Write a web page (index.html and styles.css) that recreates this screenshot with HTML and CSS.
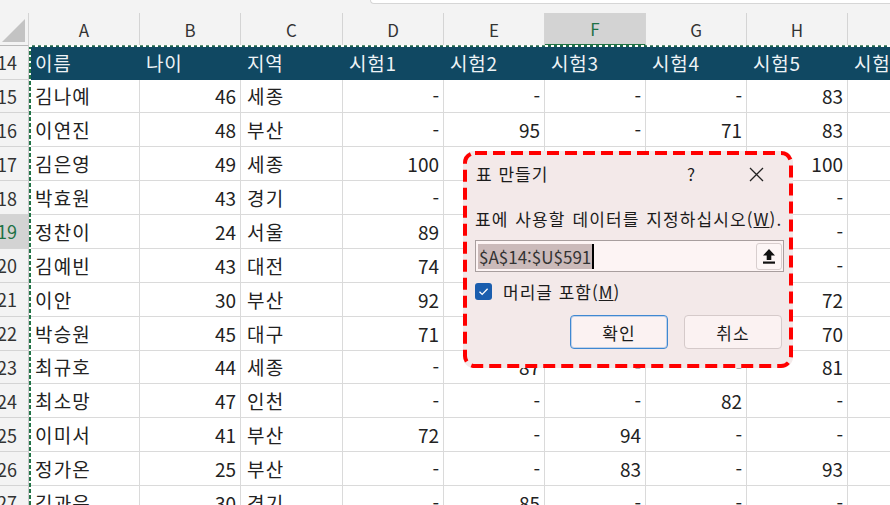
FILE: index.html
```html
<!DOCTYPE html>
<html lang="ko">
<head>
<meta charset="utf-8">
<link rel="stylesheet" href="styles.css">
</head>
<body>
<div class="topstrip"><div class="fbar"></div></div>
<div class="wrap">
<div class="sheet">
  <div class="c corner"><div class="tri"></div></div>
  <div class="c ch">A</div><div class="c ch">B</div><div class="c ch">C</div><div class="c ch">D</div><div class="c ch">E</div><div class="c ch sel">F</div><div class="c ch">G</div><div class="c ch">H</div><div class="c ch">I</div>

  <div class="c rh">14</div>
  <div class="c hd">이름</div><div class="c hd">나이</div><div class="c hd">지역</div><div class="c hd">시험1</div><div class="c hd">시험2</div><div class="c hd">시험3</div><div class="c hd">시험4</div><div class="c hd">시험5</div><div class="c hd">시험6</div>

  <div class="c rh">15</div>
  <div class="c l">김나예</div><div class="c r">46</div><div class="c l">세종</div><div class="c r">-</div><div class="c r">-</div><div class="c r">-</div><div class="c r">-</div><div class="c r">83</div><div class="c"></div>

  <div class="c rh">16</div>
  <div class="c l">이연진</div><div class="c r">48</div><div class="c l">부산</div><div class="c r">-</div><div class="c r">95</div><div class="c r">-</div><div class="c r">71</div><div class="c r">83</div><div class="c"></div>

  <div class="c rh">17</div>
  <div class="c l">김은영</div><div class="c r">49</div><div class="c l">세종</div><div class="c r">100</div><div class="c r">-</div><div class="c r">-</div><div class="c r">-</div><div class="c r">100</div><div class="c"></div>

  <div class="c rh">18</div>
  <div class="c l">박효원</div><div class="c r">43</div><div class="c l">경기</div><div class="c r">-</div><div class="c r">-</div><div class="c r">-</div><div class="c r">-</div><div class="c r">-</div><div class="c"></div>

  <div class="c rh sel">19</div>
  <div class="c l">정찬이</div><div class="c r">24</div><div class="c l">서울</div><div class="c r">89</div><div class="c r">-</div><div class="c r">-</div><div class="c r">-</div><div class="c r">-</div><div class="c"></div>

  <div class="c rh">20</div>
  <div class="c l">김예빈</div><div class="c r">43</div><div class="c l">대전</div><div class="c r">74</div><div class="c r">-</div><div class="c r">-</div><div class="c r">-</div><div class="c r">-</div><div class="c"></div>

  <div class="c rh">21</div>
  <div class="c l">이안</div><div class="c r">30</div><div class="c l">부산</div><div class="c r">92</div><div class="c r">-</div><div class="c r">-</div><div class="c r">-</div><div class="c r">72</div><div class="c"></div>

  <div class="c rh">22</div>
  <div class="c l">박승원</div><div class="c r">45</div><div class="c l">대구</div><div class="c r">71</div><div class="c r">-</div><div class="c r">-</div><div class="c r">-</div><div class="c r">70</div><div class="c"></div>

  <div class="c rh">23</div>
  <div class="c l">최규호</div><div class="c r">44</div><div class="c l">세종</div><div class="c r">-</div><div class="c r">87</div><div class="c r">-</div><div class="c r">-</div><div class="c r">81</div><div class="c"></div>

  <div class="c rh">24</div>
  <div class="c l">최소망</div><div class="c r">47</div><div class="c l">인천</div><div class="c r">-</div><div class="c r">-</div><div class="c r">-</div><div class="c r">82</div><div class="c r">-</div><div class="c"></div>

  <div class="c rh">25</div>
  <div class="c l">이미서</div><div class="c r">41</div><div class="c l">부산</div><div class="c r">72</div><div class="c r">-</div><div class="c r">94</div><div class="c r">-</div><div class="c r">-</div><div class="c"></div>

  <div class="c rh">26</div>
  <div class="c l">정가온</div><div class="c r">25</div><div class="c l">부산</div><div class="c r">-</div><div class="c r">-</div><div class="c r">83</div><div class="c r">-</div><div class="c r">93</div><div class="c"></div>

  <div class="c rh">27</div>
  <div class="c l">김과은</div><div class="c r">30</div><div class="c l">경기</div><div class="c r">-</div><div class="c r">85</div><div class="c r">-</div><div class="c r">-</div><div class="c r">-</div><div class="c"></div>
</div>
<div class="ants"></div>

<div class="dlg">
  <div class="dlg-title">
    <span class="title-text">표 만들기</span>
    <span class="help">?</span>
    <svg class="close" width="15" height="15" viewBox="0 0 15 15"><path d="M1 1L14 14M14 1L1 14" stroke="#222" stroke-width="1.3" fill="none"/></svg>
  </div>
  <div class="dlg-label">표에 사용할 데이터를 지정하십시오(<u>W</u>).</div>
  <div class="range">
    <span class="sel-text">$A$14:$U$591</span><span class="caret"></span>
    <span class="pick"><svg width="12" height="15" viewBox="0 0 12 15"><path d="M6 0L12 6.5H8.3V11H3.7V6.5H0Z" fill="#111"/><rect x="0" y="12.5" width="12" height="2.2" fill="#111"/></svg></span>
  </div>
  <div class="chk-row">
    <span class="chk"><svg width="17" height="17" viewBox="0 0 17 17"><path d="M4.5 8.8L7.2 11.4L12.6 5.8" stroke="#fff" stroke-width="1.3" fill="none"/></svg></span>
    <span class="chk-label">머리글 포함(<u>M</u>)</span>
  </div>
  <div class="btn-row">
    <span class="btn primary">확인</span>
    <span class="btn">취소</span>
  </div>
  <svg class="dash" width="330" height="217" viewBox="0 0 330 217"><rect x="2" y="2" width="326" height="213" rx="10" ry="10" fill="none" stroke="#ff0000" stroke-width="4" stroke-dasharray="12 6"/></svg>
</div>
</div>
</body>
</html>
```

FILE: styles.css
```css
* { box-sizing: border-box; margin: 0; padding: 0; }
html, body { width: 890px; height: 505px; overflow: hidden; }
body {
  background: #f3f3f3;
  font-family: "Noto Sans CJK KR", "Noto Sans", sans-serif;
  color: #222;
}
.topstrip { display: flex; height: 13px; }
.fbar {
  margin-left: 370px;
  flex: 1;
  height: 4px;
  background: #fff;
  border-left: 1px solid #d6d6d6;
  border-bottom: 1px solid #d6d6d6;
  border-bottom-left-radius: 4px;
}
.wrap { position: relative; }
.sheet {
  display: grid;
  grid-template-columns: 29px 111px 101px 102px 101px 101px 101px 101px 101px 100px;
  grid-template-rows: 33px 33.5px repeat(13, 33.88px);
  width: 948px;
  background: #fff;
}
.c {
  border-right: 1px solid #dadada;
  border-bottom: 1px solid #dadada;
  font-size: 19px;
  line-height: 1;
  display: flex;
  align-items: center;
  white-space: nowrap;
  overflow: hidden;
}
.l { padding-left: 6px; letter-spacing: 1.2px; }
.r { justify-content: flex-end; padding-right: 4px; }
.corner {
  background: #f3f3f3;
  border-right: 1px solid #d4d4d4;
  border-bottom: 1px solid #b9b9b9;
  justify-content: flex-end;
  align-items: flex-end;
  padding: 0 3px 3px 0;
}
.tri {
  width: 23px;
  height: 23px;
  background: #c3c3c3;
  clip-path: polygon(100% 0, 100% 100%, 0 100%);
}
.ch {
  background: #f3f3f3;
  border-right: 1px solid #d4d4d4;
  border-bottom: 1px solid #b9b9b9;
  justify-content: center;
  font-size: 17px;
  color: #333;
}
.ch.sel {
  background: #d3d3d3;
  color: #1e7145;
  border-bottom: 2px solid #217346;
}
.rh {
  background: #f3f3f3;
  border-right: 1px solid #c8c8c8;
  border-bottom: 1px solid #d4d4d4;
  justify-content: flex-end;
  padding-right: 11px;
  font-size: 18px;
  color: #333;
}
.rh.sel { background: #d3d3d3; color: #1e7145; }
.hd {
  background: #104862;
  color: #eef3f6;
  border-right: 0;
  border-bottom: 0;
  padding-left: 6px;
  letter-spacing: 0.8px;
}
.ants {
  position: absolute;
  left: 29px;
  top: 32px;
  width: 870px;
  height: 480px;
  background-image:
    repeating-linear-gradient(90deg, #ffffff 0 3px, rgba(33,115,70,0.6) 3px 6px),
    repeating-linear-gradient(180deg, #217346 0 4px, #ffffff 4px 6px);
  background-size: 100% 2px, 2px 100%;
  background-position: 0 0, 0 0;
  background-repeat: no-repeat;
}
.dlg {
  position: absolute;
  left: 463px;
  top: 138px;
  width: 330px;
  height: 217px;
  background: #f3e9e9;
  border-radius: 11px;
  padding: 0 9px 0 12px;
  display: flex;
  flex-direction: column;
  font-size: 17px;
  line-height: 1;
  color: #1b1b1b;
}
.dlg-title { height: 48px; display: flex; align-items: center; padding: 0 0 3px 1px; }
.title-text { flex: 1; letter-spacing: 1px; }
.help { margin-right: 54px; }
.close { margin-right: 20px; margin-top: 2px; }
.dlg-label { margin-top: 9px; height: 24px; line-height: 22px; white-space: nowrap; letter-spacing: 1.1px; word-spacing: 1px; }
.range {
  margin-top: 8px;
  height: 32px;
  border: 1px solid #a89e9e;
  background: #fdf4f4;
  display: flex;
  align-items: center;
  padding: 0 1px 0 2px;
}
.sel-text { background: #cbbaba; height: 25px; line-height: 25px; padding: 0 1px; color: #333; }
.caret { width: 2px; height: 25px; background: #000; }
.pick {
  margin-left: auto;
  width: 26px;
  height: 27px;
  border: 1px solid #d8cece;
  border-radius: 3px;
  background: #fdf6f6;
  display: flex;
  align-items: center;
  justify-content: center;
}
.chk-row { margin-top: 9px; height: 20px; display: flex; align-items: center; gap: 11px; }
.chk-label { letter-spacing: 1px; }
.chk { width: 17px; height: 17px; border-radius: 3px; background: #1b5eae; display: flex; }
.btn-row { margin-top: 14px; display: flex; justify-content: flex-end; gap: 16px; padding-right: 2px; }
.btn {
  width: 98px;
  height: 34px;
  border: 1px solid #d5caca;
  border-radius: 4px;
  background: #fbf2f2;
  display: flex;
  align-items: center;
  justify-content: center;
  letter-spacing: 1px;
}
.btn.primary { border-color: #3f88d2; box-shadow: inset 0 0 0 1px rgba(63,136,210,0.3); }
.dash { position: absolute; left: 0; top: 0; }
```
